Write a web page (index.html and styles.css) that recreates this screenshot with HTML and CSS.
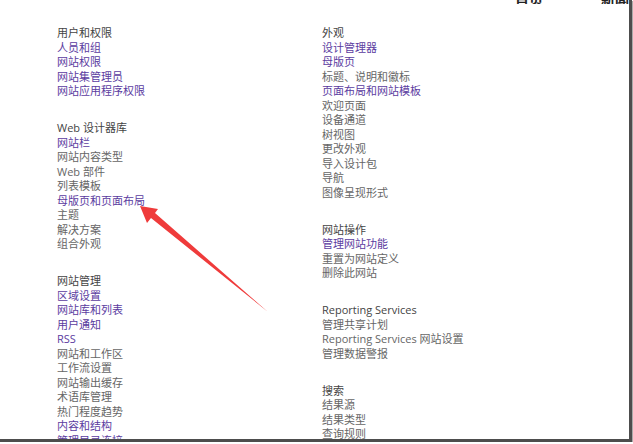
FILE: index.html
```html
<!DOCTYPE html>
<html lang="zh-CN">
<head>
    <meta charset="UTF-8">
    <title>网站设置</title>
    <link rel="stylesheet" href="styles.css">
</head>
<body>
    <div class="frame">
        <div class="topnav">
            <span class="nav-home">首页</span>
            <span class="nav-news">新闻</span>
        </div>
        <div class="columns">
            <div class="column">
                <div class="group">
                    <div class="heading">用户和权限</div>
                    <a class="link">人员和组</a>
                    <a class="link">网站权限</a>
                    <a class="link">网站集管理员</a>
                    <a class="link">网站应用程序权限</a>
                </div>
                <div class="group">
                    <div class="heading">Web 设计器库</div>
                    <a class="link">网站栏</a>
                    <div class="item">网站内容类型</div>
                    <div class="item">Web 部件</div>
                    <div class="item">列表模板</div>
                    <a class="link">母版页和页面布局</a>
                    <div class="item">主题</div>
                    <div class="item">解决方案</div>
                    <div class="item">组合外观</div>
                </div>
                <div class="group">
                    <div class="heading">网站管理</div>
                    <a class="link">区域设置</a>
                    <a class="link">网站库和列表</a>
                    <a class="link">用户通知</a>
                    <a class="link">RSS</a>
                    <div class="item">网站和工作区</div>
                    <div class="item">工作流设置</div>
                    <div class="item">网站输出缓存</div>
                    <div class="item">术语库管理</div>
                    <div class="item">热门程度趋势</div>
                    <a class="link">内容和结构</a>
                    <a class="link">管理目录连接</a>
                </div>
            </div>
            <div class="column">
                <div class="group">
                    <div class="heading">外观</div>
                    <a class="link">设计管理器</a>
                    <a class="link">母版页</a>
                    <div class="item">标题、说明和徽标</div>
                    <a class="link">页面布局和网站模板</a>
                    <div class="item">欢迎页面</div>
                    <div class="item">设备通道</div>
                    <div class="item">树视图</div>
                    <div class="item">更改外观</div>
                    <div class="item">导入设计包</div>
                    <div class="item">导航</div>
                    <div class="item">图像呈现形式</div>
                </div>
                <div class="group">
                    <div class="heading">网站操作</div>
                    <a class="link">管理网站功能</a>
                    <div class="item">重置为网站定义</div>
                    <div class="item">删除此网站</div>
                </div>
                <div class="group">
                    <div class="heading">Reporting Services</div>
                    <div class="item">管理共享计划</div>
                    <div class="item">Reporting Services 网站设置</div>
                    <div class="item">管理数据警报</div>
                </div>
                <div class="group">
                    <div class="heading">搜索</div>
                    <div class="item">结果源</div>
                    <div class="item">结果类型</div>
                    <div class="item">查询规则</div>
                </div>
            </div>
        </div>
        <!-- 红色箭头标注 -->
        <svg class="arrow" width="633" height="444" viewBox="0 0 633 444">
            <polygon points="140,206 158,209 155,213 268,312 151,218 147,223" fill="#ef3b3b"/>
        </svg>
    </div>
</body>
</html>
```

FILE: styles.css
```css
body {
    margin: 0;
    padding: 0;
    background: #fff;
    font-family: "Open Sans", "Noto Sans CJK SC", sans-serif;
    font-size: 11px;
    overflow: hidden;
}
.frame {
    position: relative;
    width: 629px;
    height: 439px;
    border-right: 3px solid #4d4d4d;
    border-bottom: 3px solid #4d4d4d;
    box-shadow: 1px 1px 0 #aaa;
    overflow: hidden;
    background: #fff;
}
.topnav {
    height: 4px;
    overflow: hidden;
    display: flex;
    align-items: flex-end;
    font-size: 14px;
    font-weight: bold;
    color: #222;
}
.topnav span {
    line-height: 14px;
    margin-bottom: -2px;
}
.nav-home {
    margin-left: 515px;
}
.nav-news {
    margin-left: 58px;
}
.columns {
    display: flex;
    padding: 22px 0 0 57px;
}
.column {
    width: 265px;
}
.group {
    margin-bottom: 22.5px;
}
.heading,
.link,
.item {
    display: block;
    line-height: 14.5px;
    white-space: nowrap;
}
.heading {
    color: #444;
}
.link {
    color: #5b3c9f;
}
.item {
    color: #666;
}
.arrow {
    position: absolute;
    left: 0;
    top: 0;
}
```
